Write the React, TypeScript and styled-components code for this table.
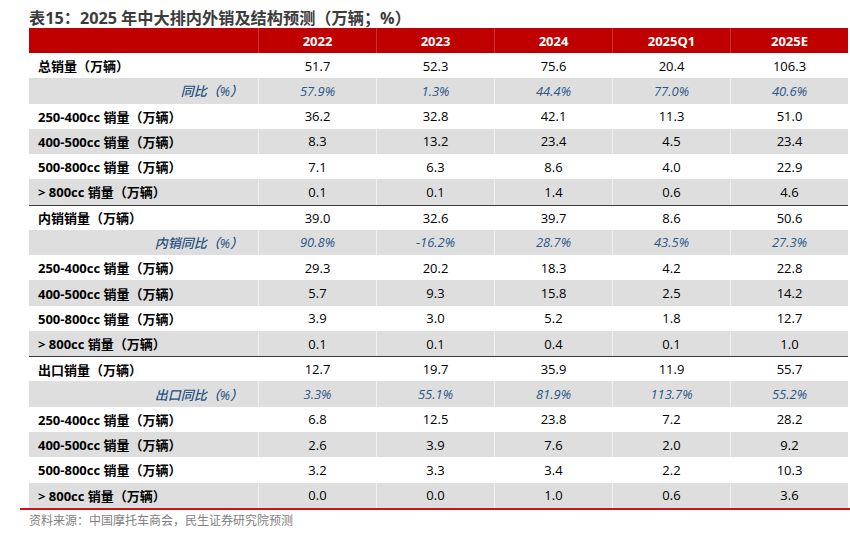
import React from "react";
import styled, { createGlobalStyle } from "styled-components";

const Global = createGlobalStyle`
  html, body { margin: 0; padding: 0; background: #fff; }
  body { font-family: "Open Sans", "Noto Sans CJK SC", sans-serif; }
`;

const Page = styled.div`
  width: 850px;
  height: 537px;
  padding-left: 20px;
  box-sizing: border-box;
  overflow: hidden;
`;

const Title = styled.h1`
  margin: 0 0 0 9px;
  padding-top: 8px;
  height: 28px;
  box-sizing: border-box;
  font-family: "Open Sans", "Noto Sans CJK SC", sans-serif;
  font-size: 16.2px;
  line-height: 20px;
  font-weight: 700;
  color: #3c3c3c;
  white-space: nowrap;
`;

const Table = styled.div`
  margin-left: 9px;
  width: 819px;
`;

const Row = styled.div<{ $shade?: boolean; $rule?: boolean }>`
  display: grid;
  grid-template-columns: 229px repeat(5, 118px);
  height: 25.28px;
  box-sizing: border-box;
  background: ${(p) => (p.$shade ? "#dedede" : "#ffffff")};
  border-top: ${(p) => (p.$rule ? "1px solid #3a3a3a" : "none")};
`;

const HeadRow = styled.div`
  display: grid;
  grid-template-columns: 229px repeat(5, 118px);
  height: 25px;
  background: #c00000;
  box-shadow: inset 0 -2px 0 #b80000;
`;

const HeadCell = styled.div`
  display: flex;
  align-items: center;
  justify-content: center;
  color: #fff;
  font-weight: 700;
  font-size: 13px;
  border-left: 1px solid rgba(255, 255, 255, 0.18);
  &:first-child { border-left: none; }
`;

const Label = styled.div<{ $italic?: boolean }>`
  display: flex;
  align-items: center;
  justify-content: ${(p) => (p.$italic ? "flex-end" : "flex-start")};
  padding: ${(p) => (p.$italic ? "0 15px 0 0" : "0 0 0 9px")};
  font-size: 13px;
  font-weight: ${(p) => (p.$italic ? 500 : 700)};
  font-style: ${(p) => (p.$italic ? "italic" : "normal")};
  color: ${(p) => (p.$italic ? "#24507f" : "#000")};
  white-space: nowrap;
`;

const Cell = styled.div<{ $italic?: boolean; $shade?: boolean }>`
  display: flex;
  align-items: center;
  justify-content: center;
  font-size: 13px;
  font-style: ${(p) => (p.$italic ? "italic" : "normal")};
  color: ${(p) => (p.$italic ? "#2b5788" : "#000")};
  border-left: 1px solid ${(p) => (p.$shade ? "rgba(255,255,255,0.55)" : "transparent")};
`;

const BottomRule = styled.div`
  width: 830px;
  height: 2px;
  background: #d0101a;
`;

const Source = styled.div`
  margin: 2px 0 0 9px;
  font-size: 12px;
  line-height: 16px;
  color: #7f7f7f;
  font-family: "Noto Sans CJK SC", sans-serif;
`;

type RowData = { label: string; values: string[]; italic?: boolean; rule?: boolean };

const rows: RowData[] = [
  { label: "总销量（万辆）", values: ["51.7", "52.3", "75.6", "20.4", "106.3"] },
  { label: "同比（%）", values: ["57.9%", "1.3%", "44.4%", "77.0%", "40.6%"], italic: true },
  { label: "250-400cc 销量（万辆）", values: ["36.2", "32.8", "42.1", "11.3", "51.0"] },
  { label: "400-500cc 销量（万辆）", values: ["8.3", "13.2", "23.4", "4.5", "23.4"] },
  { label: "500-800cc 销量（万辆）", values: ["7.1", "6.3", "8.6", "4.0", "22.9"] },
  { label: "> 800cc 销量（万辆）", values: ["0.1", "0.1", "1.4", "0.6", "4.6"] },
  { label: "内销销量（万辆）", values: ["39.0", "32.6", "39.7", "8.6", "50.6"], rule: true },
  { label: "内销同比（%）", values: ["90.8%", "-16.2%", "28.7%", "43.5%", "27.3%"], italic: true },
  { label: "250-400cc 销量（万辆）", values: ["29.3", "20.2", "18.3", "4.2", "22.8"] },
  { label: "400-500cc 销量（万辆）", values: ["5.7", "9.3", "15.8", "2.5", "14.2"] },
  { label: "500-800cc 销量（万辆）", values: ["3.9", "3.0", "5.2", "1.8", "12.7"] },
  { label: "> 800cc 销量（万辆）", values: ["0.1", "0.1", "0.4", "0.1", "1.0"] },
  { label: "出口销量（万辆）", values: ["12.7", "19.7", "35.9", "11.9", "55.7"], rule: true },
  { label: "出口同比（%）", values: ["3.3%", "55.1%", "81.9%", "113.7%", "55.2%"], italic: true },
  { label: "250-400cc 销量（万辆）", values: ["6.8", "12.5", "23.8", "7.2", "28.2"] },
  { label: "400-500cc 销量（万辆）", values: ["2.6", "3.9", "7.6", "2.0", "9.2"] },
  { label: "500-800cc 销量（万辆）", values: ["3.2", "3.3", "3.4", "2.2", "10.3"] },
  { label: "> 800cc 销量（万辆）", values: ["0.0", "0.0", "1.0", "0.6", "3.6"] },
];

const headers = ["2022", "2023", "2024", "2025Q1", "2025E"];

export default function App() {
  return (
    <>
      <Global />
      <Page>
        <Title>表15：2025 年中大排内外销及结构预测（万辆；%）</Title>
        <Table>
          <HeadRow>
            <HeadCell />
            {headers.map((h) => (
              <HeadCell key={h}>{h}</HeadCell>
            ))}
          </HeadRow>
          {rows.map((r, i) => {
            const shade = i % 2 === 1;
            return (
              <Row key={i} $shade={shade} $rule={r.rule}>
                <Label $italic={r.italic}>{r.label}</Label>
                {r.values.map((v, j) => (
                  <Cell key={j} $italic={r.italic} $shade={shade}>
                    {v}
                  </Cell>
                ))}
              </Row>
            );
          })}
        </Table>
        <BottomRule />
        <Source>资料来源：中国摩托车商会，民生证券研究院预测</Source>
      </Page>
    </>
  );
}
